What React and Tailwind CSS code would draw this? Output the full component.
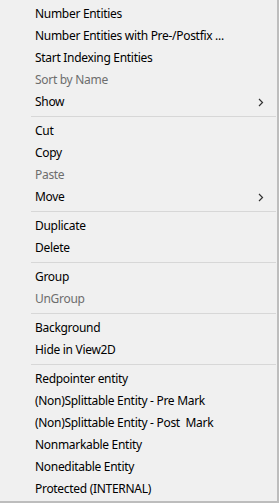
const groups = [
  [
    { label: "Number Entities" },
    { label: "Number Entities with Pre-/Postfix ..." },
    { label: "Start Indexing Entities" },
    { label: "Sort by Name", disabled: true },
    { label: "Show", submenu: true },
  ],
  [
    { label: "Cut" },
    { label: "Copy" },
    { label: "Paste", disabled: true },
    { label: "Move", submenu: true },
  ],
  [{ label: "Duplicate" }, { label: "Delete" }],
  [{ label: "Group" }, { label: "UnGroup", disabled: true }],
  [{ label: "Background" }, { label: "Hide in View2D" }],
  [
    { label: "Redpointer entity" },
    { label: "(Non)Splittable Entity - Pre Mark" },
    { label: "(Non)Splittable Entity - Post\u00a0 Mark" },
    { label: "Nonmarkable Entity" },
    { label: "Noneditable Entity" },
    { label: "Protected (INTERNAL)" },
  ],
];

function Chevron() {
  return (
    <svg width="6" height="9" viewBox="0 0 6 9" className="mr-[13px]">
      <path d="M1 1 L4.5 4.5 L1 8" fill="none" stroke="#333" strokeWidth="1.2" />
    </svg>
  );
}

function MenuItem({ item }) {
  return (
    <div className="flex h-[22px] items-center justify-between pl-[35px]">
      <span className={item.disabled ? "text-[#6d6d6d]" : "text-black"}>{item.label}</span>
      {item.submenu && <Chevron />}
    </div>
  );
}

export default function App() {
  return (
    <div
      className="flex h-[503px] w-[279px] flex-col border-b-2 border-r-2 border-[#bdbdbd] bg-[#f0f0f0] pt-[3px] text-[12px] leading-none tracking-[-0.3px]"
      style={{ fontFamily: '"Noto Sans", "Liberation Sans", sans-serif' }}
    >
      {groups.map((group, i) => (
        <div key={i}>
          {i > 0 && (
            <div className="flex h-[7px] items-center pl-[31px] pr-[1px]">
              <div className="h-px w-full bg-[#d7d7d7]" />
            </div>
          )}
          {group.map((item) => (
            <MenuItem key={item.label} item={item} />
          ))}
        </div>
      ))}
    </div>
  );
}
